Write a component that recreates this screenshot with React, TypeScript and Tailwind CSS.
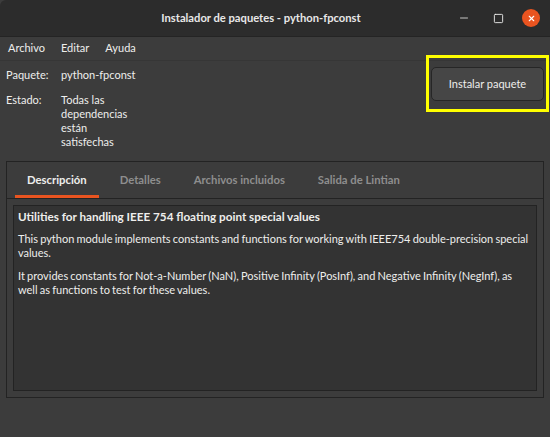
import { Minus, Square, X } from "lucide-react"

const tabs = ["Descripción", "Detalles", "Archivos incluidos", "Salida de Lintian"]

export default function App() {
  return (
    <div className="relative w-[550px] h-[437px] overflow-hidden bg-[#3c3c3c] font-['Lato',sans-serif] text-[11px] text-[#eeeeec]">
      {/* title bar */}
      <div className="flex h-[37px] items-center bg-[#2c2c2c] border-b border-[#242424] rounded-tl-[6px]">
        <div className="flex-1 pl-[70px] text-center font-bold text-[11.2px] text-[#e8e8e8]">
          Instalador de paquetes - python-fpconst
        </div>
        <div className="flex items-center w-[98px]">
          <div className="flex w-[24px] justify-center">
            <Minus className="w-[12px] h-[12px]" strokeWidth={1.6} />
          </div>
          <div className="flex w-[24px] justify-center ml-[10px]">
            <Square className="w-[11px] h-[11px]" strokeWidth={2} />
          </div>
          <div className="flex w-[18px] h-[18px] ml-[12px] items-center justify-center rounded-full bg-[#e95420]">
            <X className="w-[9px] h-[9px] text-white" strokeWidth={3} />
          </div>
        </div>
      </div>

      {/* menu */}
      <div className="flex h-[24px] items-center gap-[16px] px-[8px] border-b border-[#363636]">
        <span>Archivo</span>
        <span>Editar</span>
        <span>Ayuda</span>
      </div>

      {/* package info */}
      <div className="flex justify-between pt-[6px] pl-[6px] pr-[6px]">
        <div className="grid grid-cols-[55px_80px] gap-y-[11px] leading-[14px] pt-[1px]">
          <span>Paquete:</span>
          <span>python-fpconst</span>
          <span>Estado:</span>
          <span>Todas las dependencias están satisfechas</span>
        </div>
        <button className="w-[113px] h-[34px] rounded-[5px] border border-[#262626] bg-[#464646] text-[#eeeeec]">
          Instalar paquete
        </button>
      </div>

      {/* notebook */}
      <div className="mx-[6px] mt-[12px] h-[237px] flex flex-col border border-[#232323]">
        <div className="flex h-[37px] gap-[9px] pl-[8px] border-b border-[#232323] font-bold text-[11.3px]">
          {tabs.map((t, i) => (
            <div key={t} className={`relative flex items-center px-[12px] ${i === 0 ? "text-[#eeeeec]" : "text-[#8e8e8e]"}`}>
              {t}
              {i === 0 && <div className="absolute left-0 right-0 bottom-0 h-[3px] bg-[#e95420]" />}
            </div>
          ))}
        </div>
        <div className="flex-1 p-[6px]">
          <div className="h-full border border-[#232323] bg-[#333333] px-[4px] pt-[3px] leading-[14px] [word-spacing:-0.6px]">
            <p className="font-bold text-[11.7px] [word-spacing:0px]">Utilities for handling IEEE 754 floating point special values</p>
            <p className="mt-[9px]">
              This python module implements constants and functions for working with IEEE754 double-precision special values.
            </p>
            <p className="mt-[9px]">
              It provides constants for Not-a-Number (NaN), Positive Infinity (PosInf), and Negative Infinity (NegInf), as well as functions to test for these values.
            </p>
          </div>
        </div>
      </div>

      {/* highlight */}
      <div className="absolute left-[426px] top-[55px] w-[123px] h-[57px] border-[3px] border-[#ffff00]" />
    </div>
  )
}
